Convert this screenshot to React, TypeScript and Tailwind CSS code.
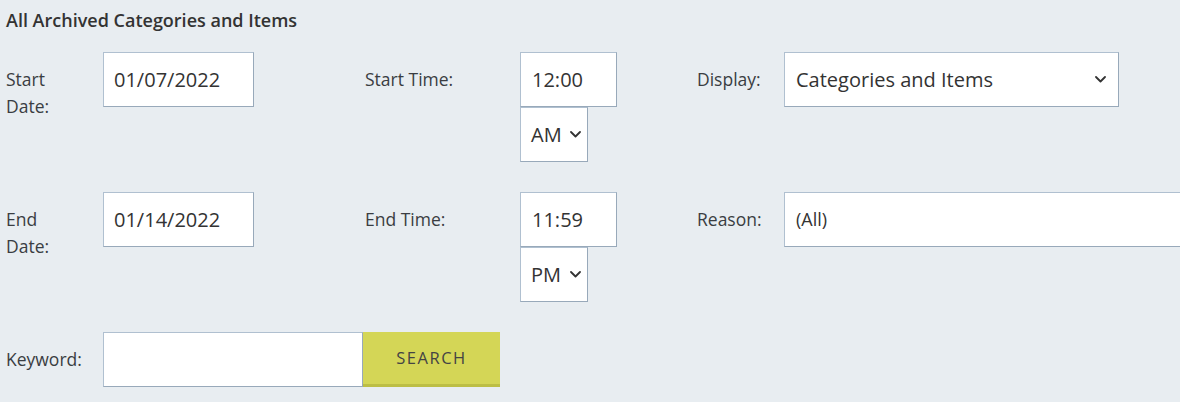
import React from "react";

const Chevron = () => (
  <svg width="11" height="7" viewBox="0 0 11 7" fill="none" className="shrink-0">
    <path d="M1 1l4.5 4.5L10 1" stroke="#333" strokeWidth="1.8" strokeLinecap="round" strokeLinejoin="round" />
  </svg>
);

const box =
  "shrink-0 bg-white border border-[#b0c0d0] border-b-[#98a9ba] border-r-[#98a9ba] h-[55px] flex items-center";

const lbl = "shrink-0 pt-[14px] text-[17.5px] leading-[27px] text-[#3a3d42]";

function Row({
  l1, l2, l3, date, time, ampm, third, reason,
}: {
  l1: React.ReactNode; l2: string; l3: string; date: string; time: string; ampm: string; third: string; reason?: boolean;
}) {
  return (
    <div className="flex items-start">
      <div className={`${lbl} w-[97px]`}>{l1}</div>
      <div className={`${box} w-[151px] pl-[10px] text-[20px] text-[#333]`}>{date}</div>
      <div className="w-[111px] shrink-0" />
      <div className={`${lbl} w-[155px]`}>{l2}</div>
      <div className="flex flex-col w-[97px] shrink-0">
        <div className={`${box} w-[97px] pl-[11px] text-[20px] text-[#333]`}>{time}</div>
        <div className={`${box} w-[68px] pl-[10px] pr-[6px] justify-between text-[20px] text-[#333]`}>
          <span>{ampm}</span>
          <Chevron />
        </div>
      </div>
      <div className="w-[80px] shrink-0" />
      <div className={`${lbl} w-[87px]`}>{l3}</div>
      {reason ? (
        <div className={`${box} w-[420px] pl-[11px] text-[18px] text-[#333]`}>{third}</div>
      ) : (
        <div className={`${box} w-[335px] pl-[11px] pr-[12px] justify-between text-[20px] text-[#333]`}>
          <span>{third}</span>
          <Chevron />
        </div>
      )}
    </div>
  );
}

export default function App() {
  return (
    <div
      className="w-[1180px] h-[402px] overflow-hidden bg-[#e8edf1] pl-[6px]"
      style={{ fontFamily: "'Open Sans', 'Noto Sans', sans-serif" }}
    >
      <div className="pt-[8px] h-[52px] text-[18px] font-semibold text-[#333] leading-[24px]">
        All Archived Categories and Items
      </div>
      <div className="flex flex-col gap-[30px]">
        <Row
          l1={<>Start<br />Date:</>}
          l2="Start Time:"
          l3="Display:"
          date="01/07/2022"
          time="12:00"
          ampm="AM"
          third="Categories and Items"
        />
        <Row
          l1={<>End<br />Date:</>}
          l2="End Time:"
          l3="Reason:"
          date="01/14/2022"
          time="11:59"
          ampm="PM"
          third="(All)"
          reason
        />
        <div className="flex items-center">
          <div className="w-[97px] shrink-0 text-[17.5px] text-[#3a3d42]">Keyword:</div>
          <div className={`${box} w-[260px]`} />
          <div className="w-[137px] shrink-0 h-[55px] bg-[#d4d656] border-b-[3px] border-[#bcbe45] flex items-center justify-center text-[16.5px] tracking-[1.5px] text-[#444]">
            SEARCH
          </div>
        </div>
      </div>
    </div>
  );
}
